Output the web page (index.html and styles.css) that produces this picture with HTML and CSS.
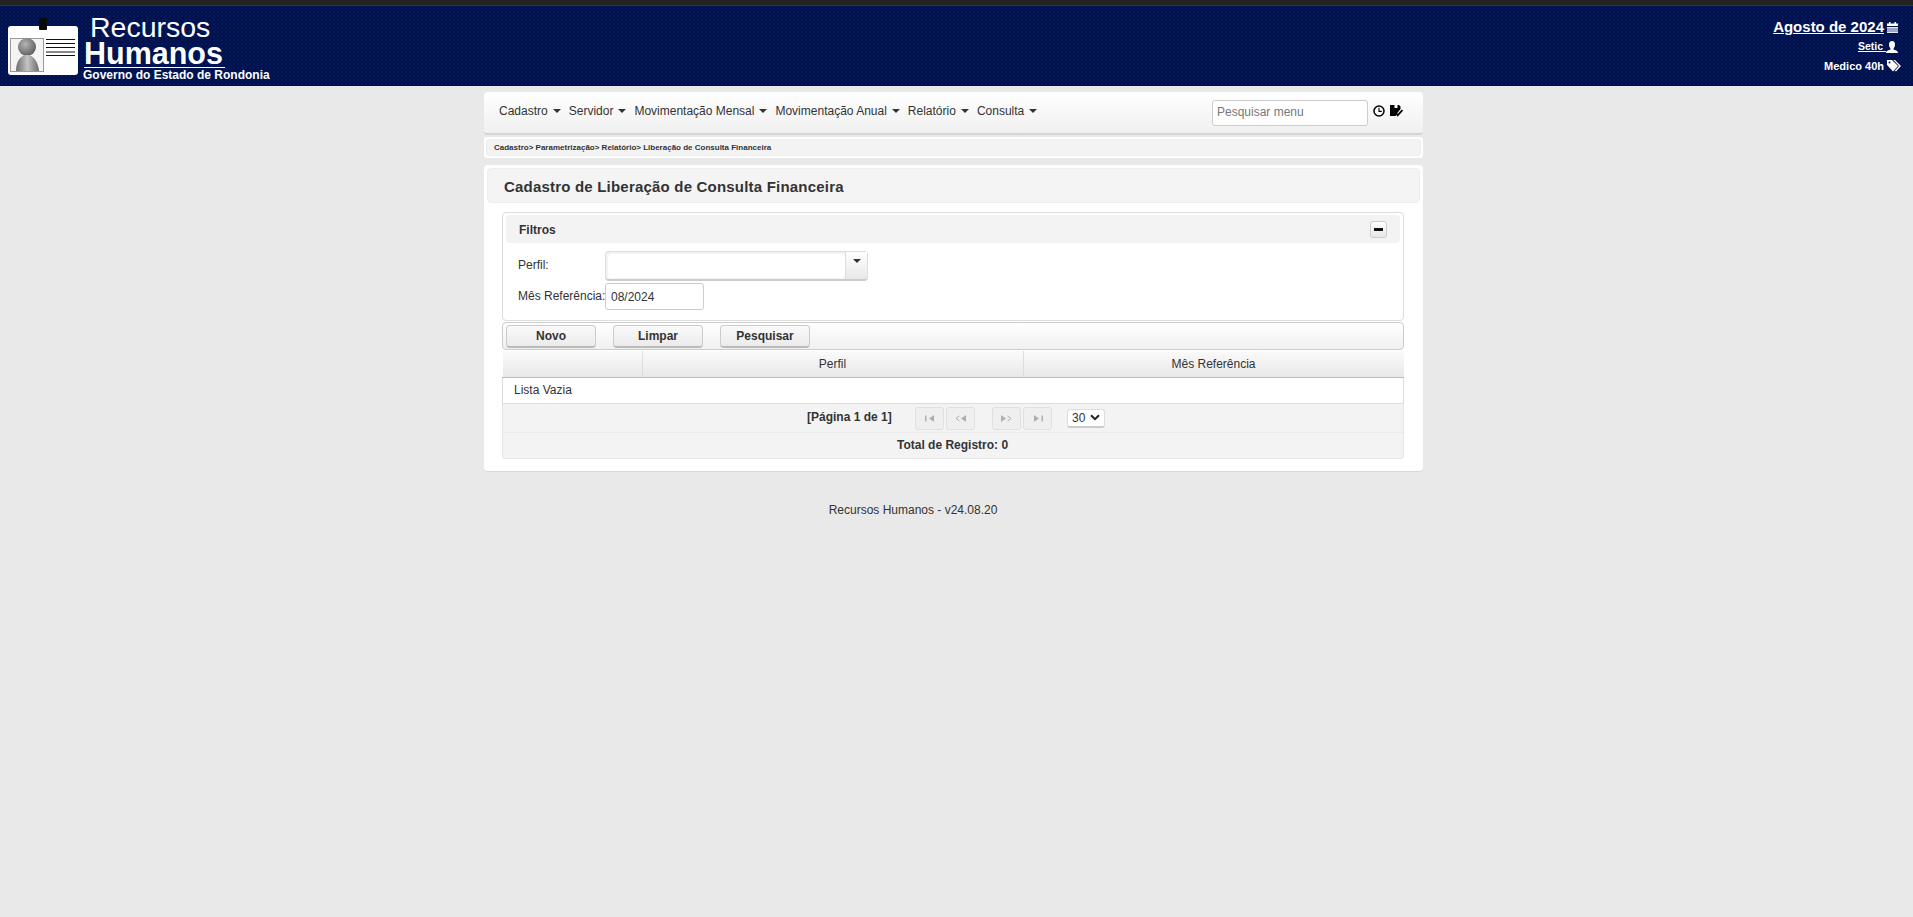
FILE: index.html
```html
<!DOCTYPE html>
<html lang="pt-BR">
<head>
    <meta charset="UTF-8">
    <title>Recursos Humanos</title>
    <link rel="stylesheet" href="styles.css">
</head>
<body>
    <div class="topStrip"></div>
    <div class="header">
        <div class="brand">
            <svg class="logo" width="70" height="57" viewBox="0 0 70 57">
                <defs>
                    <radialGradient id="headGrad" cx="40%" cy="35%" r="70%">
                        <stop offset="0" stop-color="#b5b5b5"/>
                        <stop offset="1" stop-color="#5a5a5a"/>
                    </radialGradient>
                    <linearGradient id="bodyGrad" x1="0" y1="0" x2="1" y2="0">
                        <stop offset="0" stop-color="#6e6e6e"/>
                        <stop offset="0.5" stop-color="#c4c4c4"/>
                        <stop offset="1" stop-color="#6a6a6a"/>
                    </linearGradient>
                </defs>
                <rect x="0" y="8" width="70" height="49" rx="3" fill="#fff"/>
                <rect x="31" y="0" width="8" height="12" rx="1" fill="#0a0a0a"/>
                <rect x="2.5" y="20.5" width="33" height="33" fill="#f4f4f4" stroke="#9a9a9a"/>
                <circle cx="19" cy="29" r="9" fill="url(#headGrad)"/>
                <path d="M8 53 C8 44 12 37 19 37 C26 37 30 44 31 53 Z" fill="url(#bodyGrad)"/>
                <path d="M38 21.500H67M38 25.500H67M38 29.500H67M38 34H67M38 37.500H67" stroke="#111" stroke-width="1"/>
            </svg>
            <div class="brandText">
                <div class="brandTop">Recursos</div>
                <div class="brandMain">Humanos</div>
                <div class="brandSub">Governo do Estado de Rondonia</div>
            </div>
        </div>
        <div class="userInfo">
            <div class="userMonth">
                <a href="#">Agosto de 2024</a>
                <svg width="11" height="11" viewBox="0 0 11 11"><path d="M2 0h1.500v1.500h4V0H9v1.500h2V4H0V1.500h2z" fill="#fff"/><path d="M0 5h11v6H0z" fill="#dfe6f5"/><path d="M0 7h11M0 9h11" stroke="#00124f" stroke-width=".6"/></svg>
            </div>
            <div class="userName">
                <a href="#">Setic&nbsp;</a>
                <svg width="12" height="12" viewBox="0 0 12 12"><path d="M6 0c2 0 3 1.500 3 3.500S8 7 7.500 7.500v1C9 9.200 12 9.500 12 12H0c0-2.500 3-2.800 4.500-3.500v-1C4 7 3 5.500 3 3.500S4 0 6 0z" fill="#fff"/></svg>
            </div>
            <div class="userRole">
                <span>Medico 40h</span>
                <svg width="14" height="12" viewBox="0 0 14 12"><path d="M0 0h5l6 6-5 5.500L0 5z" fill="#fff"/><path d="M6.500 0H8l6 6-5 5.500-1.200-.8L12 6z" fill="#fff"/><circle cx="2.500" cy="2.500" r="1" fill="#00124f"/></svg>
            </div>
        </div>
    </div>

    <div class="page">
        <div class="menubar">
            <ul class="menu">
                <li>Cadastro<i class="caret"></i></li>
                <li>Servidor<i class="caret"></i></li>
                <li>Movimentação Mensal<i class="caret"></i></li>
                <li>Movimentação Anual<i class="caret"></i></li>
                <li>Relatório<i class="caret"></i></li>
                <li>Consulta<i class="caret"></i></li>
            </ul>
            <div class="menuSearch">
                <input class="searchInput" type="text" placeholder="Pesquisar menu">
                <svg width="12" height="12" viewBox="0 0 12 12"><circle cx="6" cy="6" r="5" fill="#fff" stroke="#000" stroke-width="1.500"/><path d="M6 2.800v3.600h2.800" fill="none" stroke="#000" stroke-width="1.100"/></svg>
                <svg width="13" height="12" viewBox="0 0 13 12"><path d="M0 0h9l1.500 1.500V4L7 8.500 5.500 11H0z" fill="#000"/><path d="M4.500 0h3v3h-3z" fill="#fff"/><path d="M5.500 7.500l2.200 2.800L12.500 5" fill="none" stroke="#000" stroke-width="1.800"/></svg>
            </div>
        </div>

        <div class="crumbs">
            <div class="crumbsInner">Cadastro&gt; Parametrização&gt; Relatório&gt; Liberação de Consulta Financeira</div>
        </div>

        <div class="mainPanel">
            <h1 class="pageTitle">Cadastro de Liberação de Consulta Financeira</h1>

            <div class="content">
                <div class="filters">
                    <div class="filtersHead">
                        <span class="filtersLabel">Filtros</span>
                        <button class="collapseBtn" type="button"><i></i></button>
                    </div>
                    <div class="formRow rowPerfil">
                        <label>Perfil:</label>
                        <div class="combo">
                            <div class="comboText"></div>
                            <div class="comboBtn"><i class="caret"></i></div>
                        </div>
                    </div>
                    <div class="formRow">
                        <label>Mês Referência:</label>
                        <input class="monthInput" type="text" value="08/2024">
                    </div>
                </div>

                <div class="toolbar">
                    <button class="toolBtn" type="button">Novo</button>
                    <span class="grip"></span>
                    <button class="toolBtn" type="button">Limpar</button>
                    <span class="grip"></span>
                    <button class="toolBtn" type="button">Pesquisar</button>
                </div>

                <table class="grid">
                    <thead>
                        <tr>
                            <th class="colFirst"></th>
                            <th class="colPerfil">Perfil</th>
                            <th>Mês Referência</th>
                        </tr>
                    </thead>
                    <tbody>
                        <tr><td colspan="3">Lista Vazia</td></tr>
                    </tbody>
                </table>

                <div class="pager">
                    <div class="pagerRow">
                        <strong class="pagerInfo">[Página 1 de 1]</strong>
                        <span class="pageBtn"><svg width="10" height="7" viewBox="0 0 10 7"><path d="M0 .5h1.500v6H0zM9 0v7L4 3.500z"/></svg></span>
                        <span class="pageBtn"><svg width="11" height="7" viewBox="0 0 11 7"><path d="M4.500 1L1 3.500 4.500 6" fill="none" stroke="#b0b0b0"/><path d="M11 0v7L6 3.500z"/></svg></span>
                        <span class="pageBtn pageNext"><svg width="11" height="7" viewBox="0 0 11 7"><path d="M0 0v7l5-3.500z"/><path d="M6.500 1L10 3.500 6.500 6" fill="none" stroke="#b0b0b0"/></svg></span>
                        <span class="pageBtn"><svg width="10" height="7" viewBox="0 0 10 7"><path d="M1 0v7l5-3.500zM8.500 .5H10v6H8.500z"/></svg></span>
                        <span class="pageSize">30<svg width="10" height="7" viewBox="0 0 10 7"><path d="M1 1.200L5 5.200 9 1.200" fill="none" stroke="#222" stroke-width="2"/></svg></span>
                    </div>
                    <div class="pagerTotal">Total de Registro: 0</div>
                </div>
            </div>
        </div>

        <div class="footer">Recursos Humanos - v24.08.20</div>
    </div>
</body>
</html>
```

FILE: styles.css
```css
html, body {
    margin: 0;
    padding: 0;
}

body {
    font-family: "Liberation Sans", Arial, sans-serif;
    font-size: 12px;
    color: #333;
    background: #e9e9e9;
    min-height: 917px;
    overflow: hidden;
}

.topStrip {
    height: 5px;
    background: #222;
}

/* Header */
.header {
    height: 81px;
    box-sizing: border-box;
    display: flex;
    justify-content: space-between;
    color: #fff;
    background-color: #000f48;
    background-image:
        radial-gradient(circle, #011a60 0 .8px, transparent 1px),
        radial-gradient(circle, #011657 0 .8px, transparent 1px);
    background-size: 4px 4px;
    background-position: 0 0, 2px 2px;
    border-top: 1px solid #2c3350;
}

.brand {
    display: flex;
    padding: 12px 0 0 8px;
}

.logo {
    flex: none;
}

.brandText {
    margin: -4px 0 0 5px;
}

.brandTop {
    font-size: 28.5px;
    line-height: 27px;
    margin-left: 7px;
}

.brandMain {
    font-size: 30.5px;
    font-weight: bold;
    line-height: 24px;
    margin-left: 1px;
    width: 141px;
    height: 26px;
    border-bottom: 1px solid #fff;
}

.brandSub {
    font-size: 12px;
    font-weight: bold;
    line-height: 14px;
}

.userInfo {
    padding: 11px 15px 0 0;
    font-weight: bold;
}

.userInfo > div {
    display: flex;
    justify-content: flex-end;
    align-items: center;
}

.userInfo a {
    color: #fff;
}

.userMonth {
    font-size: 15px;
    line-height: 20px;
    gap: 3px;
}

.userName {
    font-size: 10.5px;
    line-height: 19px;
}

.userRole {
    font-size: 11px;
    line-height: 20px;
    gap: 3px;
    margin-right: -3px;
}

/* Page column */
.page {
    width: 939px;
    margin-left: 484px;
    padding-top: 6px;
}

.menubar {
    height: 43px;
    box-sizing: border-box;
    display: flex;
    justify-content: space-between;
    border-radius: 4px;
    background: linear-gradient(#fff, #f0f0f0);
    border-bottom: 2px solid #d4d4d4;
}

.menu {
    list-style: none;
    display: flex;
    margin: 0;
    padding: 12px 0 0 15px;
    gap: 8px;
    line-height: 14px;
}

.caret {
    display: inline-block;
    width: 0;
    height: 0;
    margin-left: 5px;
    vertical-align: 2px;
    border-left: 4px solid transparent;
    border-right: 4px solid transparent;
    border-top: 4px solid #333;
}

.menuSearch {
    display: flex;
    align-items: flex-start;
    gap: 5px;
    padding: 8px 20px 0 0;
}

.menuSearch svg {
    margin-top: 5px;
}

.searchInput {
    width: 156px;
    height: 26px;
    box-sizing: border-box;
    padding: 0 4px 2px;
    border: 1px solid #ccc;
    border-radius: 3px;
    font: 12px "Liberation Sans", Arial, sans-serif;
    background: #fff;
}

.searchInput::placeholder {
    color: #777;
    opacity: 1;
}

.crumbs {
    margin-top: 2px;
    padding: 2px;
    background: #fff;
    border-radius: 3px;
}

.crumbsInner {
    height: 17px;
    line-height: 15px;
    padding-left: 7px;
    box-sizing: border-box;
    background: #f3f3f3;
    border: 1px solid #eee;
    border-radius: 3px;
    font-size: 8px;
    font-weight: bold;
}

/* Main panel */
.mainPanel {
    margin-top: 7px;
    height: 307px;
    box-sizing: border-box;
    padding: 3px;
    background: #fff;
    border-radius: 4px;
    border-bottom: 1px solid #d8d8d8;
}

.pageTitle {
    height: 35px;
    margin: 0;
    padding-left: 16px;
    font-size: 15px;
    letter-spacing: .2px;
    line-height: 35px;
    background: #f4f4f4;
    border: 1px solid #eee;
    box-sizing: border-box;
    border-radius: 4px;
}

.content {
    margin: 9px 16px 0 15px;
}

.filters {
    height: 109px;
    box-sizing: border-box;
    padding: 2px 3px;
    border: 1px solid #ddd;
    border-radius: 4px;
}

.filtersHead {
    height: 28px;
    box-sizing: border-box;
    display: flex;
    justify-content: space-between;
    align-items: center;
    padding: 0 13px 0 13px;
    background: #f3f3f3;
    border-radius: 4px;
    font-weight: bold;
}

.filtersLabel {
    padding-top: 1px;
}

.collapseBtn {
    width: 17px;
    height: 17px;
    padding: 0;
    display: flex;
    align-items: center;
    justify-content: center;
    border: 1px solid #ccc;
    border-radius: 3px;
    background: linear-gradient(#fff, #e6e6e6);
}

.collapseBtn i {
    width: 9px;
    height: 3px;
    background: #111;
}

.formRow {
    display: flex;
    align-items: center;
    margin-top: 2px;
}

.rowPerfil {
    margin-top: 8px;
}

.formRow label {
    width: 99px;
    padding: 0 0 2px 12px;
    flex: none;
    box-sizing: border-box;
    white-space: nowrap;
}

.combo {
    display: flex;
    width: 263px;
    height: 30px;
    box-sizing: border-box;
    border: 1px solid #ddd;
    border-bottom: 2px solid #ccc;
    border-radius: 4px;
    background: #f3f3f3;
}

.comboText {
    flex: 1;
    margin: 2px 0 1px 2px;
    background: #fff;
    border-radius: 3px;
}

.comboBtn {
    width: 22px;
    padding-top: 7px;
    text-align: center;
    box-sizing: border-box;
    border-left: 1px solid #ddd;
    background: linear-gradient(#fff, #e8e8e8);
}

.comboBtn .caret {
    margin: 0;
    vertical-align: top;
}

.monthInput {
    width: 99px;
    height: 27px;
    box-sizing: border-box;
    padding: 0 5px;
    border: 1px solid #ccc;
    border-radius: 3px;
    font: 12px "Liberation Sans", Arial, sans-serif;
    color: #333;
}

.toolbar {
    height: 28px;
    box-sizing: border-box;
    margin-top: 1px;
    padding: 2px 3px 0;
    display: flex;
    align-items: flex-start;
    border: 1px solid #ccc;
    border-radius: 4px;
    background: linear-gradient(#fff, #f0f0f0);
}

.toolBtn {
    width: 90px;
    height: 23px;
    padding: 0;
    font: bold 12px "Liberation Sans", Arial, sans-serif;
    color: #333;
    border: 1px solid #ccc;
    border-bottom: 2px solid #bbb;
    border-radius: 4px;
    background: linear-gradient(#fafafa, #ebebeb);
}

.grip {
    width: 4px;
    height: 9px;
    margin: 9px 6px 0 7px;
    background: radial-gradient(circle, #666 0 .6px, transparent .7px) 0 0 / 2px 2px;
}

/* Table */
.grid {
    width: 100%;
    margin-top: 1px;
    table-layout: fixed;
    border-collapse: collapse;
}

.grid th {
    height: 26px;
    padding: 0;
    font-weight: normal;
    background: linear-gradient(#fafafa, #e8e8e8);
    border-left: 1px solid #ddd;
    border-bottom: 1px solid #bbb;
}

.grid .colFirst {
    width: 139px;
    border-left: 0;
}

.grid .colPerfil {
    width: 380px;
}

.grid td {
    height: 26px;
    padding: 0 0 2px 11px;
    box-sizing: border-box;
    border: 1px solid #ddd;
    border-top: 0;
}

.pager {
    background: #f3f3f3;
    border: 1px solid #e6e6e6;
    border-top: 0;
    border-radius: 0 0 4px 4px;
}

.pagerRow {
    height: 28px;
    display: flex;
    align-items: center;
    padding-left: 304px;
    border-bottom: 1px solid #ebebeb;
}

.pagerInfo {
    width: 108px;
    flex: none;
    padding-bottom: 2px;
}

.pageBtn {
    width: 29px;
    height: 23px;
    margin-right: 2px;
    display: flex;
    align-items: center;
    justify-content: center;
    box-sizing: border-box;
    border: 1px solid #e0e0e0;
    border-radius: 3px;
    background: #efefef;
}

.pageBtn svg {
    fill: #b0b0b0;
}

.pageNext {
    margin-left: 15px;
}

.pageSize {
    margin-left: 13px;
    width: 38px;
    height: 19px;
    box-sizing: border-box;
    display: flex;
    align-items: center;
    gap: 5px;
    padding-left: 4px;
    font-size: 12px;
    border: 1px solid #ddd;
    border-bottom: 2px solid #ccc;
    border-radius: 3px;
    background: #fff;
}

.pagerTotal {
    height: 25px;
    line-height: 25px;
    text-align: center;
    font-weight: bold;
    padding-right: 1px;
}

.footer {
    padding: 31px 81px 0 0;
    text-align: center;
    line-height: 14px;
}
```
